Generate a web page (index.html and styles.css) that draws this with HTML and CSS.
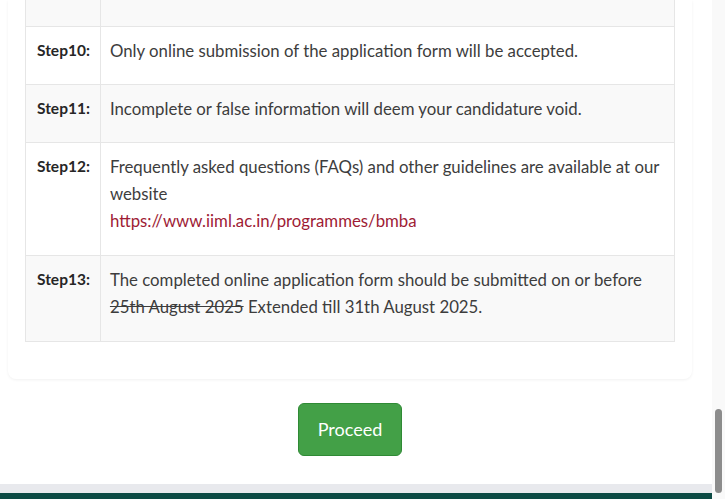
FILE: index.html
```html
<!DOCTYPE html>
<html lang="en">
<head>
    <meta charset="UTF-8">
    <meta name="viewport" content="width=device-width, initial-scale=1.0">
    <title>Application Steps</title>
    <link rel="stylesheet" href="styles.css">
</head>
<body>
    <div class="page">
        <div class="card">
            <table class="steps">
                <tr class="row-tail">
                    <th></th>
                    <td></td>
                </tr>
                <tr>
                    <th>Step10:</th>
                    <td><p>Only online submission of the application form will be accepted.</p></td>
                </tr>
                <tr>
                    <th>Step11:</th>
                    <td><p>Incomplete or false information will deem your candidature void.</p></td>
                </tr>
                <tr>
                    <th>Step12:</th>
                    <td><p>Frequently asked questions (FAQs) and other guidelines are available at our website<br>
                        <a href="#">https://www.iiml.ac.in/programmes/bmba</a></p></td>
                </tr>
                <tr>
                    <th>Step13:</th>
                    <td><p>The completed online application form should be submitted on or before <s>25th August 2025</s> Extended till 31th August 2025.</p></td>
                </tr>
            </table>
        </div>

        <div class="actions">
            <button type="button" class="btn-proceed">Proceed</button>
        </div>
    </div>

    <footer class="site-footer"></footer>

    <div class="scrollbar"><span class="scrollbar-thumb"></span></div>
</body>
</html>
```

FILE: styles.css
```css
body {
    font-family: Lato, "Open Sans", sans-serif;
    margin: 0;
    background-color: #fff;
    color: #3d3d3d;
}
.page {
    width: 712px;
}
.card {
    margin: 0 20px 0 8px;
    padding: 0 17px 17px;
    background: #fff;
    border-radius: 0 0 8px 8px;
    box-shadow: 0 1px 3px rgba(0, 0, 0, 0.06);
}
.steps {
    width: 100%;
    margin-bottom: 20px;
    border-collapse: collapse;
    border: 1px solid #dcdcdc;
    border-top: none;
    font-size: 16.8px;
    line-height: 27px;
}
.steps th, .steps td {
    padding: 10px 10px 10px 9px;
    border: 1px solid #e6e6e6;
    vertical-align: top;
    text-align: left;
}
.steps th {
    width: 52px;
    padding-left: 11px;
    font-size: 15.5px;
    font-weight: bold;
    color: #262626;
}
.steps tr:nth-child(odd) {
    background-color: #f9f9f9;
}
.steps .row-tail th, .steps .row-tail td {
    height: 26px;
    padding: 0;
    border-top: none;
}
.steps p {
    margin: 0 0 10px;
}
.steps tr:nth-child(4) p, .steps tr:nth-child(5) p {
    margin-bottom: 11px;
}
.steps s {
    white-space: nowrap;
}
.steps a {
    color: #9e1c35;
    text-decoration: none;
}
.actions {
    width: 684px;
    margin: 24px 20px 0 8px;
    text-align: center;
}
.btn-proceed {
    padding: 14px 19px;
    font-family: Lato, sans-serif;
    font-size: 18px;
    line-height: 23px;
    color: #fff;
    background-color: #43a047;
    border: 1px solid #2f8a35;
    border-radius: 6px;
    cursor: pointer;
}
.btn-proceed:hover {
    background-color: #388e3c;
}
.site-footer {
    margin-top: 28px;
    height: 20px;
    border-top: 9px solid #e8e9ed;
    background-color: #0c4a44;
}
.scrollbar {
    position: fixed;
    top: 0;
    right: 0;
    width: 13px;
    height: 100%;
    background: #f9f9f9;
}
.scrollbar-thumb {
    position: absolute;
    top: 409px;
    left: 3px;
    width: 7px;
    height: 84px;
    border-radius: 4px;
    background: #8c8c8c;
}
```
